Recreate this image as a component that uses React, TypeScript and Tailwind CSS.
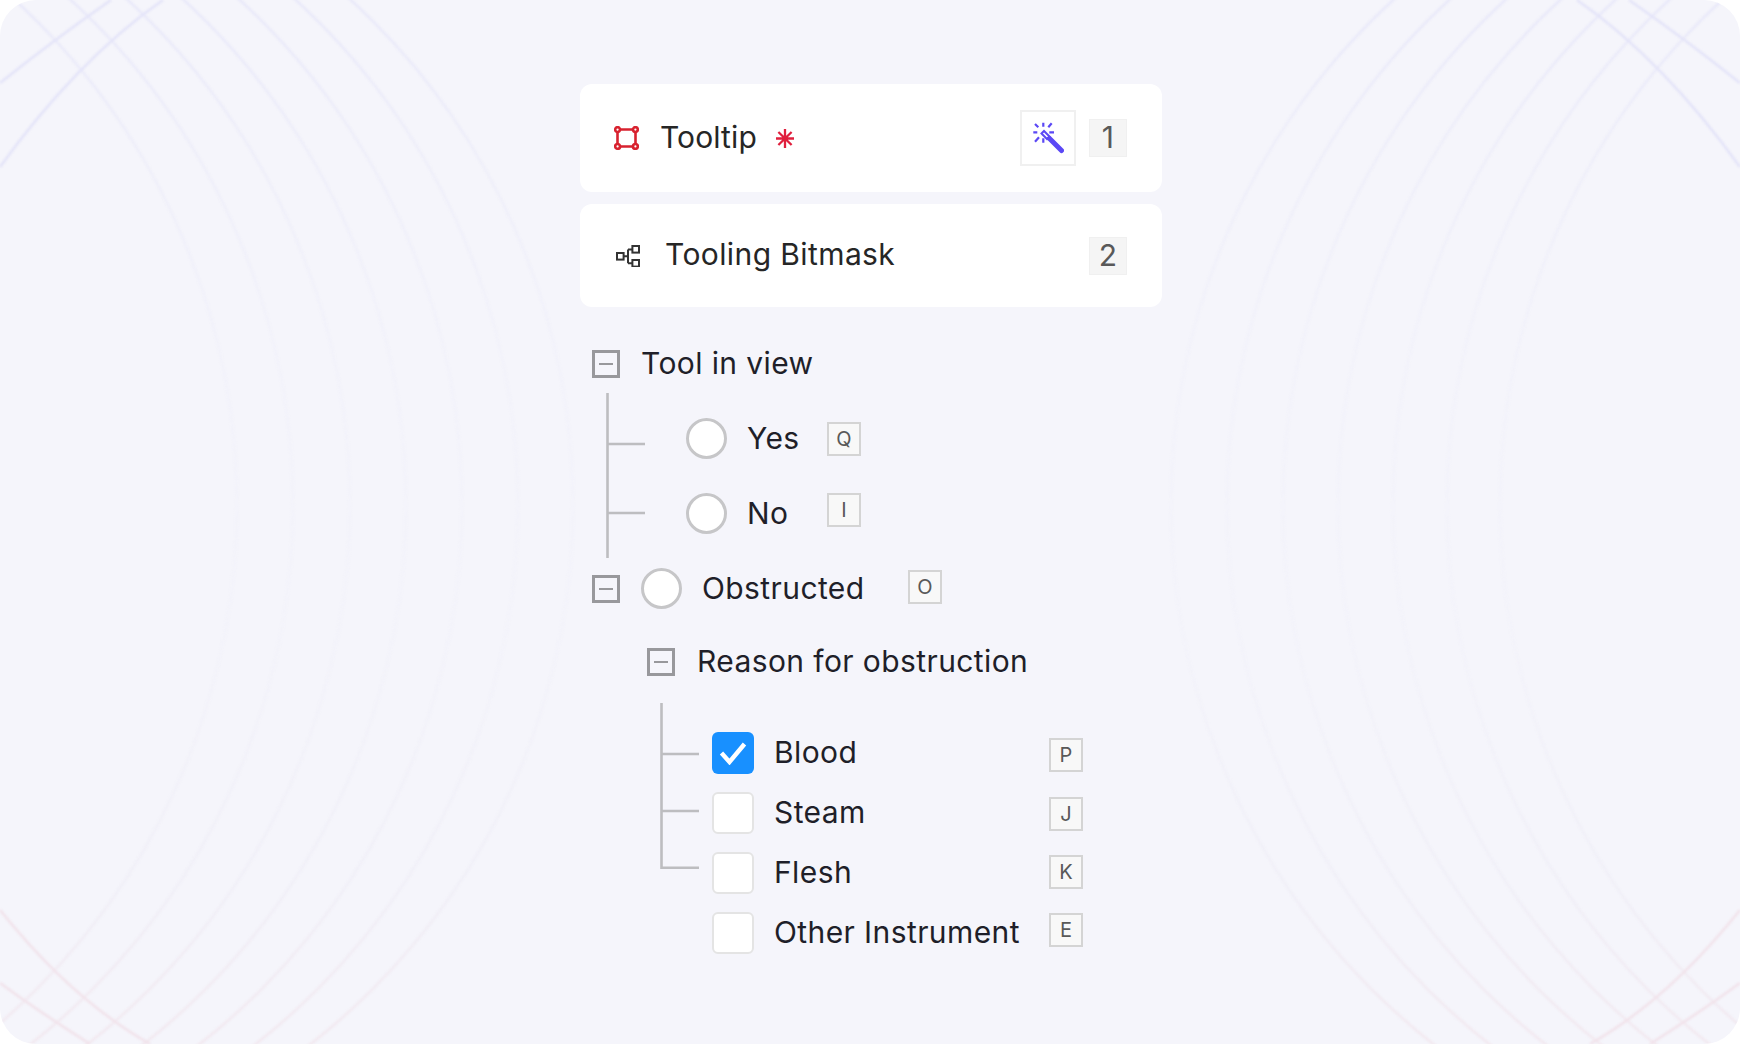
import React from "react";

const leftArcs = [237, 293, 350, 406, 462, 518, 573];
const rightArcs = [1171, 1227, 1283, 1338, 1393, 1447, 1500];

// faint rings behind the content, strongest near the top and bottom edges
const Backdrop = () => (
  <svg className="absolute inset-0" width="1740" height="1044" viewBox="0 0 1740 1044" fill="none">
    <defs>
      <linearGradient id="ring" gradientUnits="userSpaceOnUse" x1="0" y1="0" x2="0" y2="1044">
        <stop offset="0" stopColor="#e8e8f9" />
        <stop offset="0.15" stopColor="#eeeef9" />
        <stop offset="0.35" stopColor="#f2f2fa" />
        <stop offset="0.6" stopColor="#f3f3fa" />
        <stop offset="0.85" stopColor="#f0eff7" />
        <stop offset="1" stopColor="#f2e8ef" />
      </linearGradient>
    </defs>
    <g stroke="url(#ring)" strokeWidth="2.5" style={{ filter: "blur(0.8px)" }}>
      {leftArcs.map((x) => (
        <circle key={x} cx={x - 685} cy="505" r="685" />
      ))}
      {rightArcs.map((x) => (
        <circle key={x} cx={x + 685} cy="505" r="685" />
      ))}
      <path d="M0 167C48 100 105 40 163 0M0 83C35 55 75 25 111 0" stroke="#e3e3f8" />
      <path d="M1740 167C1692 100 1635 40 1577 0M1740 83C1705 55 1665 25 1629 0" stroke="#e3e3f8" />
      <path d="M0 910C40 960 90 1010 150 1044M0 983C30 1005 60 1025 90 1044" stroke="#f1e2ea" />
      <path d="M1740 910C1700 960 1650 1010 1590 1044M1740 983C1710 1005 1680 1025 1650 1044" stroke="#f1e2ea" />
    </g>
  </svg>
);

const BoxIcon = () => (
  <svg width="25" height="24" viewBox="0 0 25 24" fill="none" stroke="#d8222f" strokeWidth="2.6">
    <path d="M6 3.5H19M6 20.5H19M3.5 6V18M21.5 6V18" />
    <circle cx="3.6" cy="3.6" r="2.4" fill="#fff" />
    <circle cx="21.4" cy="3.6" r="2.4" fill="#fff" />
    <circle cx="3.6" cy="20.4" r="2.4" fill="#fff" />
    <circle cx="21.4" cy="20.4" r="2.4" fill="#fff" />
  </svg>
);

const Star = () => (
  <svg width="20" height="19" viewBox="0 0 20 19" fill="none" stroke="#e01f3d" strokeWidth="2.3">
    <path d="M10 0V19M1 9.5H19M3.4 3L16.6 16M16.6 3L3.4 16" />
  </svg>
);

const WandIcon = () => (
  <svg className="mr-[3px] mb-[2px]" width="34" height="34" viewBox="0 0 34 34" fill="none" stroke="#5b48f5" strokeWidth="2.2">
    <path d="M13.3 2.7V6.7M21.7 3.3L18.3 7.3M19.3 12.3H24M3.3 12.3H7.3M5 4L8.3 7.3M5 21.7L9 17.3M13.3 18.3V22.7" />
    <path d="M11.5 13.5L14 11L19.5 16.5L17 19Z" strokeWidth="2" />
    <path d="M19.5 18.5L31.5 30.5" strokeWidth="5" strokeLinecap="round" />
  </svg>
);

const TreeIcon = () => (
  <svg width="24" height="22" viewBox="0 0 24 22" fill="none" stroke="#333" strokeWidth="2">
    <rect x="1" y="8" width="6.6" height="6.6" />
    <rect x="16.4" y="1" width="6.6" height="6.6" />
    <rect x="16.4" y="15" width="6.6" height="6.6" />
    <path d="M7.6 11.2H12M12 4.4H16.4M12 18.2H16.4M12 4.4V18.2" />
  </svg>
);

const CardBadge = ({ children }: { children: React.ReactNode }) => (
  <div className="w-[38px] h-[38px] pb-[2px] flex items-center justify-center bg-[#f5f5f5] border border-[#f0f0f0] text-[30px] text-[#595959]">
    {children}
  </div>
);

const Toggle = () => (
  <div className="w-[28px] h-[28px] shrink-0 flex items-center justify-center border-[3px] border-[#98989c] bg-[#f5f5fb]">
    <div className="w-[14px] h-[2px] bg-[#98989c]" />
  </div>
);

const Radio = () => <div className="w-[41px] h-[41px] shrink-0 rounded-full border-[3px] border-[#c6c6c8] bg-white" />;

const Key = ({ label, className = "" }: { label: string; className?: string }) => (
  <div
    className={`w-[34px] h-[34px] shrink-0 flex items-center justify-center border-2 border-[#d4d4d4] bg-[#f8f8f8] text-[20px] tracking-normal text-[#595959] ${className}`}
  >
    {label}
  </div>
);

const Check = ({ checked }: { checked?: boolean }) =>
  checked ? (
    <div className="w-[42px] h-[42px] shrink-0 flex items-center justify-center rounded-[6px] bg-[#1890ff]">
      <svg width="28" height="24" viewBox="0 0 28 24" fill="none" stroke="#fff" strokeWidth="4.4">
        <path d="M2.5 12L10.5 21L25.5 3" />
      </svg>
    </div>
  ) : (
    <div className="w-[42px] h-[42px] shrink-0 rounded-[6px] border-2 border-[#e4e4e4] bg-white" />
  );

const reasons = [
  { label: "Blood", key: "P", checked: true, keyClass: "mt-[6px]" },
  { label: "Steam", key: "J", checked: false, keyClass: "mt-[5px]" },
  { label: "Flesh", key: "K", checked: false, keyClass: "mt-[3px]" },
  { label: "Other Instrument", key: "E", checked: false, keyClass: "mt-[1px]" },
];

export default function App() {
  return (
    <div className="w-[1740px] h-[1044px] bg-white overflow-hidden font-['Inter',sans-serif]">
      <div className="relative w-full h-full rounded-[36px] overflow-hidden bg-[#f5f5fb]">
        <Backdrop />
        <div className="relative w-[582px] ml-[580px] pt-[84px] flex flex-col text-[30px] leading-[36px] tracking-[0.4px] text-[#1f1f29]">
          {/* Tool cards */}
          <div className="h-[108px] pl-[34px] pr-[35px] flex items-center rounded-[12px] bg-white">
            <BoxIcon />
            <span className="ml-[21px] -mt-[3px] tracking-[0.1px] text-[#262626]">Tooltip</span>
            <div className="ml-[18px]">
              <Star />
            </div>
            <div className="ml-auto w-[56px] h-[56px] flex items-center justify-center border-2 border-[#f0f0f0]">
              <WandIcon />
            </div>
            <div className="ml-[13px]">
              <CardBadge>1</CardBadge>
            </div>
          </div>
          <div className="mt-[12px] h-[103px] pl-[36px] pr-[35px] flex items-center rounded-[12px] bg-white">
            <TreeIcon />
            <span className="ml-[25px] -mt-[3px] text-[#262626]">Tooling Bitmask</span>
            <div className="ml-auto">
              <CardBadge>2</CardBadge>
            </div>
          </div>

          {/* Classification tree */}
          <div className="mt-[43px] pl-[12px] flex flex-col">
            <div className="h-[28px] flex items-center">
              <Toggle />
              <span className="ml-[21px] -mt-[2px]">Tool in view</span>
            </div>

            <div className="mt-[15px] flex">
              <svg className="ml-[14px] shrink-0" width="40" height="165" viewBox="0 0 40 165" fill="none" stroke="#bdbdc0" strokeWidth="2.6">
                <path d="M1.5 0V165M1.5 51H39M1.5 120H39" />
              </svg>
              <div className="ml-[40px] pt-[25px] flex flex-col gap-[34px]">
                <div className="flex items-center">
                  <Radio />
                  <span className="ml-[20px] w-[80px] -mt-[1px]">Yes</span>
                  <Key label="Q" />
                </div>
                <div className="flex items-start">
                  <Radio />
                  <span className="ml-[20px] w-[80px] leading-[40px]">No</span>
                  <Key label="I" />
                </div>
              </div>
            </div>

            <div className="mt-[10px] flex items-center">
              <Toggle />
              <div className="ml-[21px]">
                <Radio />
              </div>
              <span className="ml-[20px] w-[206px] -mt-[2px]">Obstructed</span>
              <Key label="O" className="-mt-[4px]" />
            </div>

            <div className="mt-[39px] ml-[55px] h-[28px] flex items-center">
              <Toggle />
              <span className="ml-[22px] -mt-[2px]">Reason for obstruction</span>
            </div>

            <div className="mt-[27px] flex">
              <svg className="ml-[68px] shrink-0" width="40" height="166" viewBox="0 0 40 166" fill="none" stroke="#bdbdc0" strokeWidth="2.6">
                <path d="M1.5 0V164.7H39M1.5 51H39M1.5 108H39" />
              </svg>
              <div className="ml-[12px] pt-[29px] flex flex-col gap-[18px]">
                {reasons.map((r) => (
                  <div key={r.label} className="h-[42px] flex items-start">
                    <Check checked={r.checked} />
                    <span className="ml-[20px] w-[275px] leading-[40px]">{r.label}</span>
                    <Key label={r.key} className={r.keyClass} />
                  </div>
                ))}
              </div>
            </div>
          </div>
        </div>
      </div>
    </div>
  );
}
